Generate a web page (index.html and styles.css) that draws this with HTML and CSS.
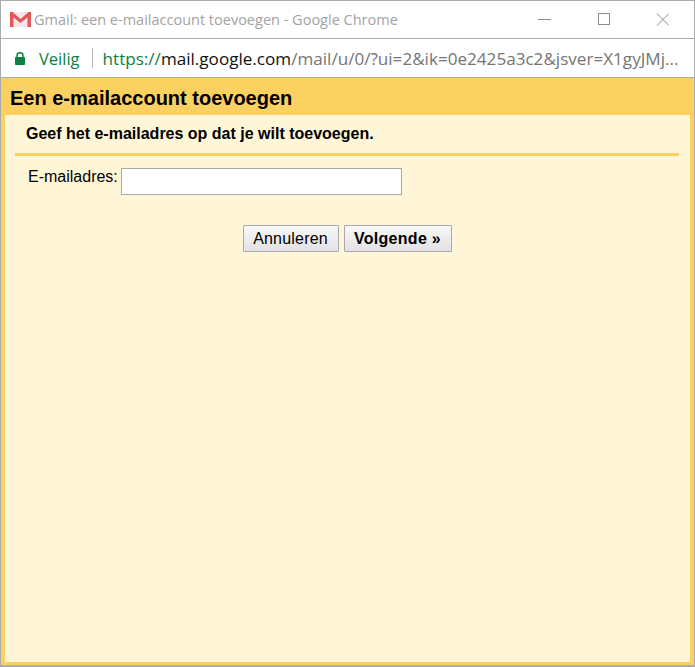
FILE: index.html
```html
<!DOCTYPE html>
<html lang="nl">
<head>
<meta charset="utf-8">
<title>Gmail: een e-mailaccount toevoegen - Google Chrome</title>
<link rel="stylesheet" href="styles.css">
</head>
<body>
<div class="window">
  <div class="titlebar">
    <svg class="gmail-icon" width="21" height="15" viewBox="0 0 21 15">
      <rect x="0" y="0" width="21" height="15" fill="#f3e6e6"/>
      <path d="M0 0H2.5L10.500 7L18.500 0H21V15H17.500V5.500L10.500 11L3.500 5.500V15H0Z" fill="#e4575a"/>
    </svg>
    <span class="window-title">Gmail: een e-mailaccount toevoegen - Google Chrome</span>
    <div class="window-controls">
      <svg class="ctl ctl-min" width="13" height="13" viewBox="0 0 13 13"><path d="M0 6.5H13" stroke="#8c8c8c" fill="none"/></svg>
      <svg class="ctl ctl-max" width="13" height="13" viewBox="0 0 13 13"><rect x="1.5" y="0.5" width="11" height="11" stroke="#8c8c8c" fill="none"/></svg>
      <svg class="ctl ctl-close" width="13" height="13" viewBox="0 0 13 13"><path d="M1 0.5L13 12.5M13 0.5L1 12.5" stroke="#8c8c8c" fill="none"/></svg>
    </div>
  </div>
  <div class="addressbar">
    <svg class="lock" width="10" height="13" viewBox="0 0 10 13">
      <path d="M2 6V3.500C2 1.800 3.200 0.800 5 0.800S8 1.800 8 3.500V6" stroke="#0b8043" stroke-width="1.500" fill="none"/>
      <rect x="0" y="5" width="10" height="8" rx="0.800" fill="#0b8043"/>
    </svg>
    <span class="secure">Veilig</span>
    <span class="divider"></span>
    <span class="url"><span class="scheme">https://</span><span class="host">mail.google.com</span>/mail/u/0/?ui=2&amp;ik=0e2425a3c2&amp;jsver=X1gyJMj...</span>
  </div>
  <div class="dialog">
    <h1 class="dialog-title">Een e-mailaccount toevoegen</h1>
    <div class="panel">
      <p class="intro">Geef het e-mailadres op dat je wilt toevoegen.</p>
      <div class="rule"></div>
      <div class="field">
        <label class="field-label" for="email">E-mailadres:</label>
        <input class="field-input" id="email" type="text">
      </div>
      <div class="actions">
        <button class="btn btn-cancel" type="button">Annuleren</button>
        <button class="btn btn-primary" type="button">Volgende »</button>
      </div>
    </div>
  </div>
</div>
</body>
</html>
```

FILE: styles.css
```css
* { box-sizing: border-box; }
html, body { margin: 0; padding: 0; }
body { width: 695px; height: 667px; overflow: hidden; background: #fff; }
.window {
  width: 695px; height: 667px;
  border: 1px solid #acacac; border-bottom-width: 2px;
  display: flex; flex-direction: column;
  font-family: "Liberation Sans", Arial, sans-serif;
}
.titlebar {
  height: 38px; flex: none; display: flex; align-items: center;
  padding-left: 9px; background: #fff; border-bottom: 1px solid #acacac;
  padding-bottom: 1px;
}
.gmail-icon { flex: none; margin-right: 3px; }
.window-title { font: 14.5px "Open Sans", sans-serif; color: #a3a3a3; white-space: nowrap; }
.window-controls { margin-left: auto; display: flex; gap: 46px; padding-right: 25px; }
.addressbar {
  height: 39px; flex: none; display: flex; align-items: center;
  padding-left: 14px; background: #fff; border-bottom: 1px solid #acacac;
  font: 17.1px "Open Sans", sans-serif; white-space: nowrap;
}
.lock { flex: none; margin-right: 14px; }
.secure { color: #0b8043; font-size: 16.5px; }
.divider { width: 1px; height: 20px; background: #b5b5b5; margin: 0 10px 0 12px; }
.url { color: #757575; }
.scheme { color: #0b8043; }
.host { color: #111; }
.dialog {
  flex: 1; display: flex; flex-direction: column;
  background: #fad060; padding: 0 4px 3px 4px;
}
.dialog-title {
  margin: 0; height: 37px; padding: 9px 0 0 5px;
  font-size: 20px; line-height: 22px; font-weight: bold; color: #000;
}
.panel { flex: 1; background: #fff5d7; padding: 0 11px 0 10px; }
.intro {
  margin: 0; padding: 10px 0 0 11px;
  font-size: 16px; line-height: 17px; font-weight: bold; color: #000;
}
.rule { height: 3px; background: #fad060; margin-top: 11px; }
.field { display: flex; align-items: flex-start; margin-top: 12px; padding-left: 13px; }
.field-label { font-size: 16px; line-height: 17px; color: #000; margin-right: 3px; }
.field-input {
  width: 281px; height: 27px; background: #fff; border: 1px solid #a9a9a9;
  border-radius: 0; padding: 0 2px; outline: none;
}
.actions { display: flex; justify-content: center; gap: 5px; margin-top: 30px; }
.btn {
  height: 27px; padding: 0; font: 16px "Liberation Sans", Arial, sans-serif; color: #000;
  border: 1px solid #a9a9a9; border-radius: 1px;
  background: linear-gradient(#f8f8f8, #e2e2e2);
}
.btn-cancel { width: 96px; letter-spacing: 0.2px; }
.btn-primary { width: 108px; font-weight: bold; letter-spacing: 0.3px; }
```
